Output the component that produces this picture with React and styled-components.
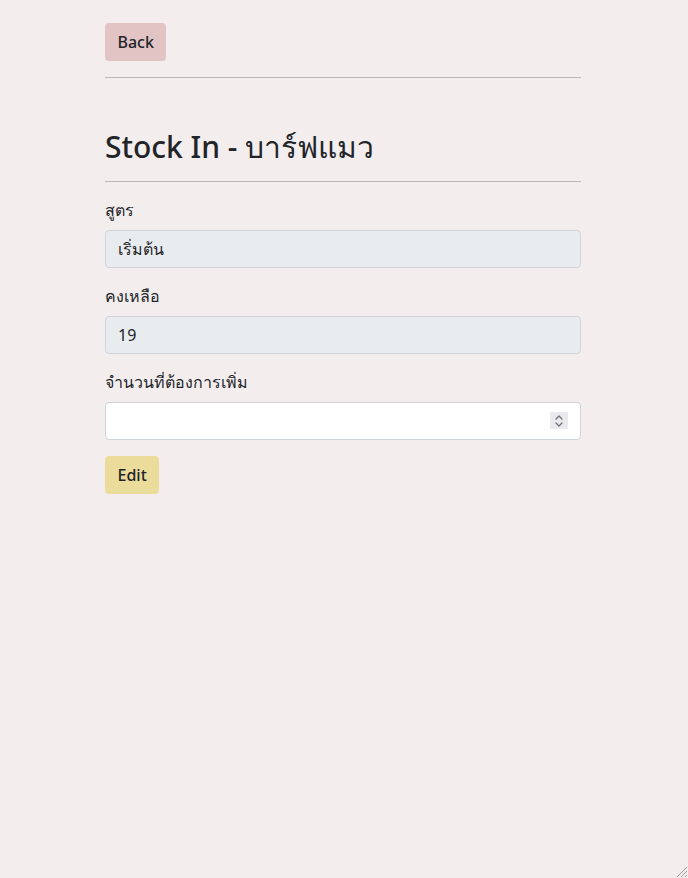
import styled, { createGlobalStyle } from 'styled-components';

const GlobalStyle = createGlobalStyle`
    html, body {
        margin: 0;
        padding: 0;
        background: #f4eded;
        font-family: "Noto Sans", "Liberation Sans", sans-serif;
        color: #212529;
    }
`

const StockIn = () => {

    const onSubmit = (e) => {
        e.preventDefault();
    }

    return (
        <Page>
            <GlobalStyle />
            <Container>
                <BackButton type='button'>Back</BackButton>
                <Rule />
                <Title>Stock In - บาร์ฟแมว</Title>
                <Rule $tight />
                <Form onSubmit={onSubmit}>
                    <Field>
                        <Label htmlFor='recipe'>สูตร</Label>
                        <Input id='recipe' type='text' value='เริ่มต้น' disabled readOnly />
                    </Field>
                    <Field>
                        <Label htmlFor='remain'>คงเหลือ</Label>
                        <Input id='remain' type='text' value='19' disabled readOnly />
                    </Field>
                    <Field>
                        <Label htmlFor='amount'>จำนวนที่ต้องการเพิ่ม</Label>
                        <NumberWrap>
                            <Input id='amount' type='number' />
                            <Spinner aria-hidden='true'>
                                <svg width='10' height='14' viewBox='0 0 10 14' fill='none' stroke='#6b6b70' strokeWidth='1.2' strokeLinecap='round' strokeLinejoin='round'>
                                    <path d='M2 5 L5 2 L8 5' />
                                    <path d='M2 9 L5 12 L8 9' />
                                </svg>
                            </Spinner>
                        </NumberWrap>
                    </Field>
                    <EditButton type='submit'>Edit</EditButton>
                </Form>
            </Container>
            <Grip width='14' height='14' viewBox='0 0 14 14' stroke='#9a9a9a' strokeWidth='1'>
                <path d='M13 3 L3 13 M13 7 L7 13 M13 11 L11 13' />
            </Grip>
        </Page>
    );
}

const Page = styled.div`
    position: relative;
    min-height: 878px;
    padding: 23px 2px 0 0;
    box-sizing: border-box;
`

const Container = styled.div`
    width: 476px;
    margin: 0 auto;
`

const Button = styled.button`
    font-family: inherit;
    font-size: 16px;
    font-weight: 500;
    color: #212529;
    height: 38px;
    padding: 0 12.5px;
    border: none;
    border-radius: 4px;
    cursor: pointer;
`

const BackButton = styled(Button)`
    display: block;
    background: #e2c4c4;
`

const EditButton = styled(Button)`
    background: #ecdc9c;
    align-self: flex-start;
`

const Rule = styled.hr`
    border: none;
    border-top: 1px solid #bdb8b8;
    margin: ${p => p.$tight ? '0 0 16px' : '16px 0 0'};
`

const Title = styled.h2`
    font-size: 30px;
    font-weight: 500;
    margin: 51px 0 16px;
    line-height: 1.2;
`

const Form = styled.form`
    display: flex;
    flex-direction: column;
    gap: 16px;
`

const Field = styled.div`
    display: flex;
    flex-direction: column;
    gap: 8px;
`

const Label = styled.label`
    font-size: 16px;
    line-height: 24px;
`

const NumberWrap = styled.div`
    position: relative;
`

const Input = styled.input`
    box-sizing: border-box;
    display: block;
    width: 100%;
    height: 38px;
    padding: 6px 12px;
    font-family: inherit;
    font-size: 16px;
    color: #212529;
    background: #fff;
    border: 1px solid #ced4da;
    border-radius: 4px;
    outline: none;
    -moz-appearance: textfield;

    &::-webkit-inner-spin-button,
    &::-webkit-outer-spin-button {
        -webkit-appearance: none;
        margin: 0;
    }

    &:disabled {
        background: #e9ecef;
        opacity: 1;
    }
`

const Spinner = styled.span`
    position: absolute;
    right: 13px;
    top: 10px;
    width: 18px;
    height: 17px;
    display: flex;
    align-items: center;
    justify-content: center;
    background: #e9e9ee;
    pointer-events: none;
`

const Grip = styled.svg`
    position: absolute;
    right: 0;
    bottom: 0;
`

export default StockIn
